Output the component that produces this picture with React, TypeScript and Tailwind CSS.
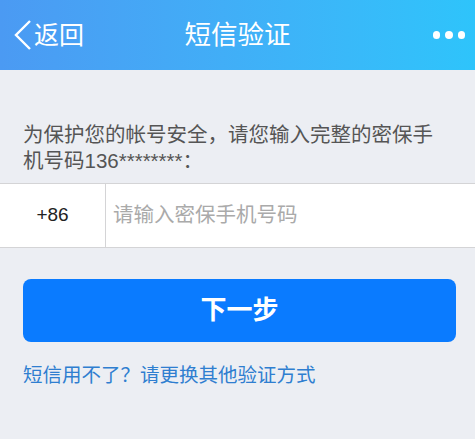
export default function App() {
  return (
    <div
      className="min-h-[439px] w-full bg-[#eceef3]"
      style={{ fontFamily: '"Liberation Sans", "Noto Sans CJK SC", sans-serif' }}
    >
      <div className="relative flex h-[70px] items-center bg-gradient-to-r from-[#4b9af3] to-[#2ec4fb] text-white">
        <div className="flex items-center pl-[13px]">
          <svg width="19" height="32" viewBox="0 0 19 32" fill="none">
            <path d="M17 2 L3 16 L17 30" stroke="white" strokeWidth="2.4" />
          </svg>
          <span className="ml-[2px] text-[25px] leading-none">返回</span>
        </div>
        <div className="absolute left-1/2 -translate-x-1/2 text-[26.5px] leading-none">短信验证</div>
        <div className="ml-auto mr-[10px] flex gap-[5px]">
          <span className="h-[7.5px] w-[7.5px] rounded-full bg-white" />
          <span className="h-[7.5px] w-[7.5px] rounded-full bg-white" />
          <span className="h-[7.5px] w-[7.5px] rounded-full bg-white" />
        </div>
      </div>

      <p className="pl-[23px] pr-[30px] pt-[52px] text-[20.5px] leading-[26px] text-[#555]">
        为保护您的帐号安全，请您输入完整的密保手机号码136********：
      </p>

      <div className="mt-[9px] flex h-[65px] border-y border-[#d4d4d6] bg-white">
        <div className="flex w-[106px] items-center justify-center border-r border-[#d4d4d6] text-[19px] text-[#222]">
          +86
        </div>
        <div className="flex flex-1 items-center pl-[7px] text-[20.5px] text-[#aaaaaa]">
          请输入密保手机号码
        </div>
      </div>

      <div className="pl-[23px] pr-[19px] pt-[31px]">
        <button
          type="button"
          className="flex h-[63px] w-full items-center justify-center rounded-[8px] bg-[#0a7bff] text-[26px] font-bold text-white"
        >
          下一步
        </button>
      </div>

      <p className="px-[23px] pt-[19px] text-[19.5px] text-[#2f7ed0]">短信用不了？请更换其他验证方式</p>
    </div>
  );
}
